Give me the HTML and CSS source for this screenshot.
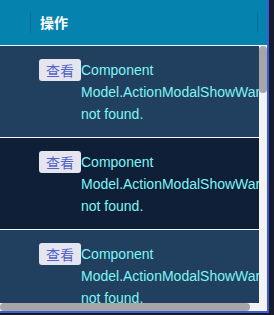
FILE: index.html
```html
<!DOCTYPE html>
<html lang="zh">
<head>
<meta charset="UTF-8">
<meta name="viewport" content="width=device-width, initial-scale=1.0">
<title>Grid</title>
<link rel="stylesheet" href="styles.css">
</head>
<body>

<div class="grid">
  <div class="grid-head">
    <div class="head-cell col-check"></div>
    <div class="head-cell col-action">操作</div>
    <div class="head-cell col-gutter"></div>
  </div>
  <div class="grid-body">
    <div class="grid-view">
      <table class="grid-table">
        <tbody id="rows"></tbody>
      </table>
    </div>
    <div class="vbar"><div class="vbar-thumb"></div></div>
    <div class="hbar"><div class="hbar-thumb"></div></div>
    <div class="bar-corner"></div>
  </div>
</div>

<script>
  var rows = document.getElementById('rows');
  for (var i = 0; i < 15; i++) {
    var tr = document.createElement('tr');
    tr.innerHTML =
      '<td class="col-check"></td>' +
      '<td class="col-action"><div class="cell-action">' +
      '<span class="btn-view">查看</span>' +
      '<div class="cell-text">Component Model.ActionModalShowWarning not found.</div>' +
      '</div></td>';
    rows.appendChild(tr);
  }
</script>

</body>
</html>
```

FILE: styles.css
```css
body {
  margin: 0;
  padding: 0;
  background-color: #161c2b;
  font-family: "Liberation Sans", "Noto Sans CJK SC", sans-serif;
  font-size: 14px;
  overflow: hidden;
}

.grid {
  width: 267px;
  height: 311px;
  border-right: 2px solid #3a5bd5;
  border-bottom: 2px solid #3a5bd5;
  display: flex;
  flex-direction: column;
}

.grid-head {
  height: 45px;
  flex: none;
  display: flex;
  align-items: center;
  background-color: #0583ae;
  border-bottom: 1px solid #f4f6f8;
  color: white;
  font-weight: bold;
}

.head-cell {
  position: relative;
  height: 45px;
  line-height: 45px;
}

.head-cell.col-check::after,
.head-cell.col-action::after {
  content: "";
  position: absolute;
  right: 0;
  top: 12px;
  height: 21px;
  width: 1px;
  background-color: rgba(0, 70, 100, 0.3);
}

.head-cell.col-check {
  width: 31px;
}

.head-cell.col-action {
  flex: 1;
  padding-left: 9px;
  font-family: "Noto Sans CJK SC", sans-serif;
}

.head-cell.col-gutter {
  width: 9px;
}

/* body with drawn scrollbars */
.grid-body {
  flex: 1;
  min-height: 0;
  display: grid;
  grid-template-columns: 1fr 8px;
  grid-template-rows: 1fr 8px;
}

.grid-view {
  overflow: hidden;
  min-height: 0;
}

.vbar,
.hbar,
.bar-corner {
  background-color: #f3f3f3;
}

.vbar-thumb {
  width: 8px;
  height: 47px;
  border-radius: 4px;
  background-color: #a6a6a6;
}

.hbar-thumb {
  width: 250px;
  height: 8px;
  border-radius: 4px;
  background-color: #a6a6a6;
}

.grid-table {
  width: 268px;
  table-layout: fixed;
  border-collapse: collapse;
  border-spacing: 0;
}

.grid-table tr {
  background-color: #21405f;
  border-bottom: 1px solid #f4f6f8;
}

.grid-table tr:nth-child(even) {
  background-color: #0f1f38;
}

.grid-table td {
  padding: 0;
  vertical-align: top;
}

.grid-table td.col-check {
  width: 31px;
}

.cell-action {
  display: flex;
  align-items: flex-start;
  padding: 13px 8px 12px 8px;
}

.btn-view {
  display: block;
  flex: none;
  width: 42px;
  height: 22px;
  line-height: 22px;
  text-align: center;
  background-color: #e4e5ee;
  color: #5262c8;
  border-radius: 3px;
  font-size: 14px;
  font-family: "Noto Sans CJK SC", sans-serif;
}

.cell-text {
  flex: 1;
  min-width: 0;
  overflow: hidden;
  color: #7ef4f4;
  line-height: 22px;
}
```
